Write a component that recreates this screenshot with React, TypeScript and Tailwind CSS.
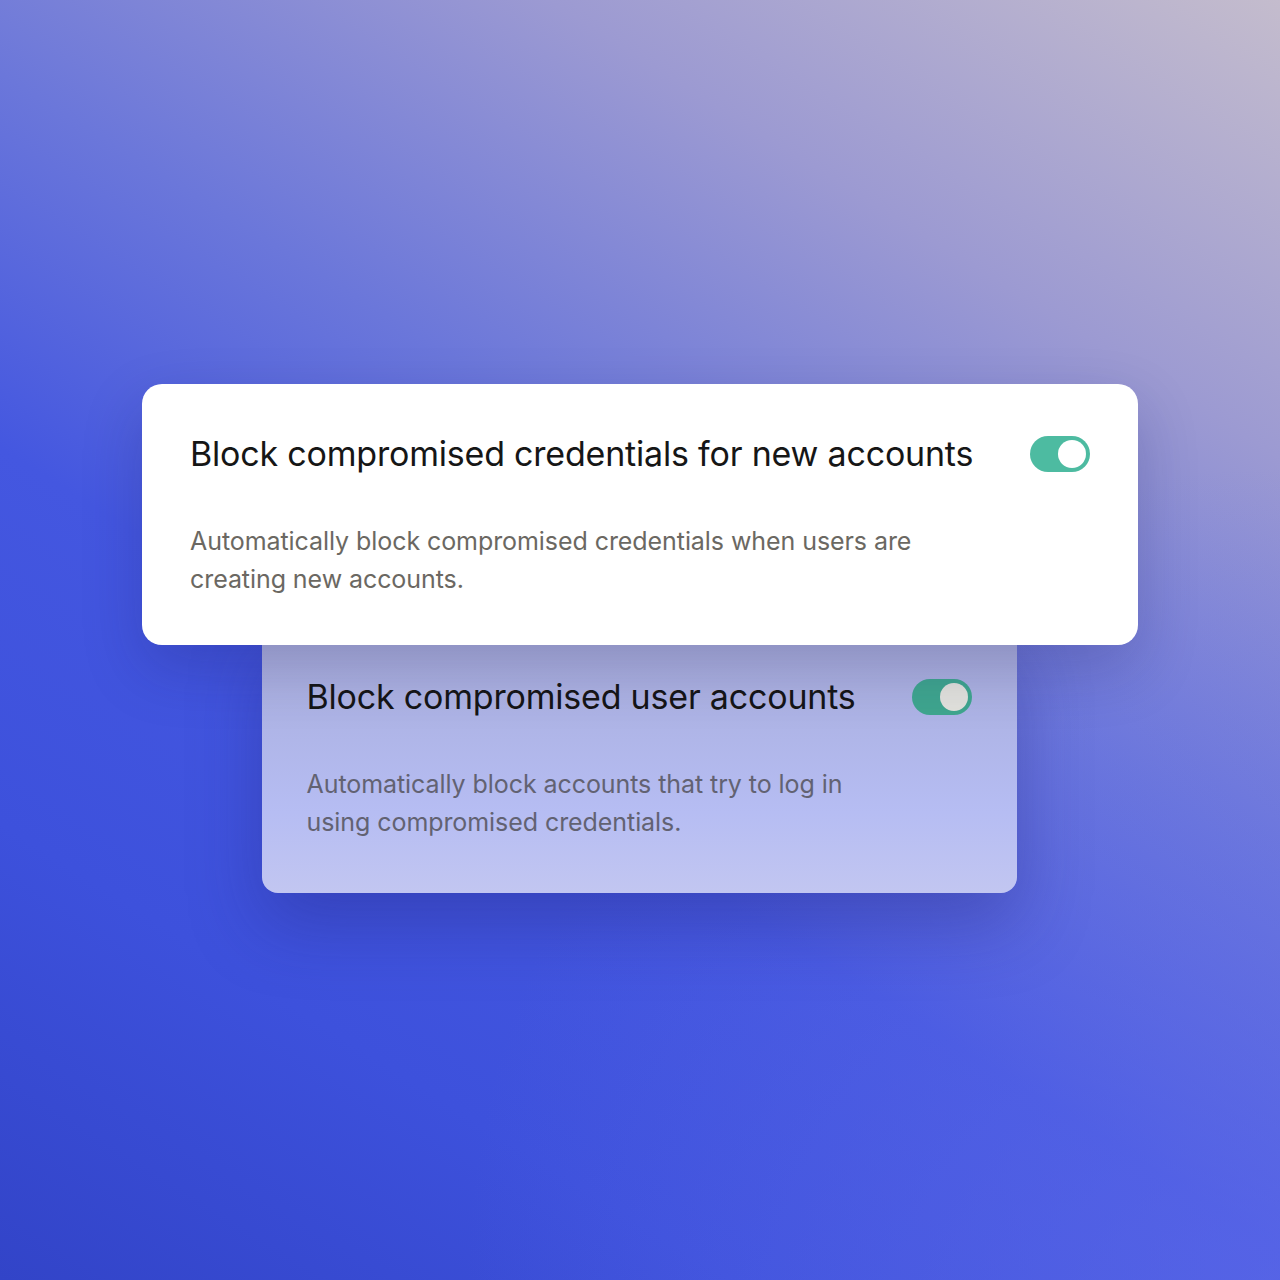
const Toggle = ({ muted }: { muted?: boolean }) => {
  return (
    <div
      className={
        muted
          ? "flex h-[36px] w-[60px] shrink-0 items-center justify-end rounded-full bg-[#3fa68e] px-[4px]"
          : "flex h-[36px] w-[60px] shrink-0 items-center justify-end rounded-full bg-[#4dbba1] px-[4px]"
      }
    >
      <div
        className={
          muted
            ? "h-[28px] w-[28px] rounded-full bg-[#e2e2dc]"
            : "h-[28px] w-[28px] rounded-full bg-white"
        }
      />
    </div>
  );
};

const App = () => {
  return (
    <main
      className="relative h-[1280px] w-full overflow-hidden bg-[radial-gradient(ellipse_at_100%_100%,rgba(100,110,235,0.55)_0%,rgba(100,110,235,0)_45%),linear-gradient(212deg,#c4bccd_0%,#9c9ad2_22%,#6b77da_42%,#4457e0_60%,#3d51dc_78%,#3244c8_100%)] pt-[384px] font-['Inter',sans-serif]"
    >
      <div className="flex flex-col items-center">
        {/* front card */}
        <section className="relative z-10 w-[996px] rounded-[20px] bg-white px-[48px] pb-[47px] pt-[48px] shadow-[0_24px_60px_rgba(25,25,90,0.22)]">
          <div className="flex items-center justify-between">
            <h2 className="text-[34px] leading-[44px] text-[#161616] tracking-[-0.2px]">
              Block compromised credentials for new accounts
            </h2>
            <Toggle />
          </div>
          <p className="mt-[46px] max-w-[740px] text-[25px] leading-[38px] tracking-[-0.07px] text-[#6b6862]">
            Automatically block compromised credentials when users are creating new accounts.
          </p>
        </section>

        {/* back card */}
        <section className="-mt-[20px] w-[755px] -translate-x-[1px] rounded-[16px] bg-[linear-gradient(180deg,#abafda_0%,#aeb4e6_35%,#b6bdf3_70%,#c2c6f1_100%)] px-[45px] pb-[52px] pt-[50px] shadow-[0_30px_70px_rgba(35,35,120,0.35)]">
          <div className="flex items-center justify-between">
            <h2 className="text-[34px] leading-[44px] text-[#151515] tracking-[-0.2px]">
              Block compromised user accounts
            </h2>
            <Toggle muted />
          </div>
          <p className="mt-[46px] max-w-[560px] text-[25px] leading-[38px] tracking-[-0.07px] text-[#626272]">
            Automatically block accounts that try to log in using compromised credentials.
          </p>
        </section>
      </div>
    </main>
  );
};

export default App;
